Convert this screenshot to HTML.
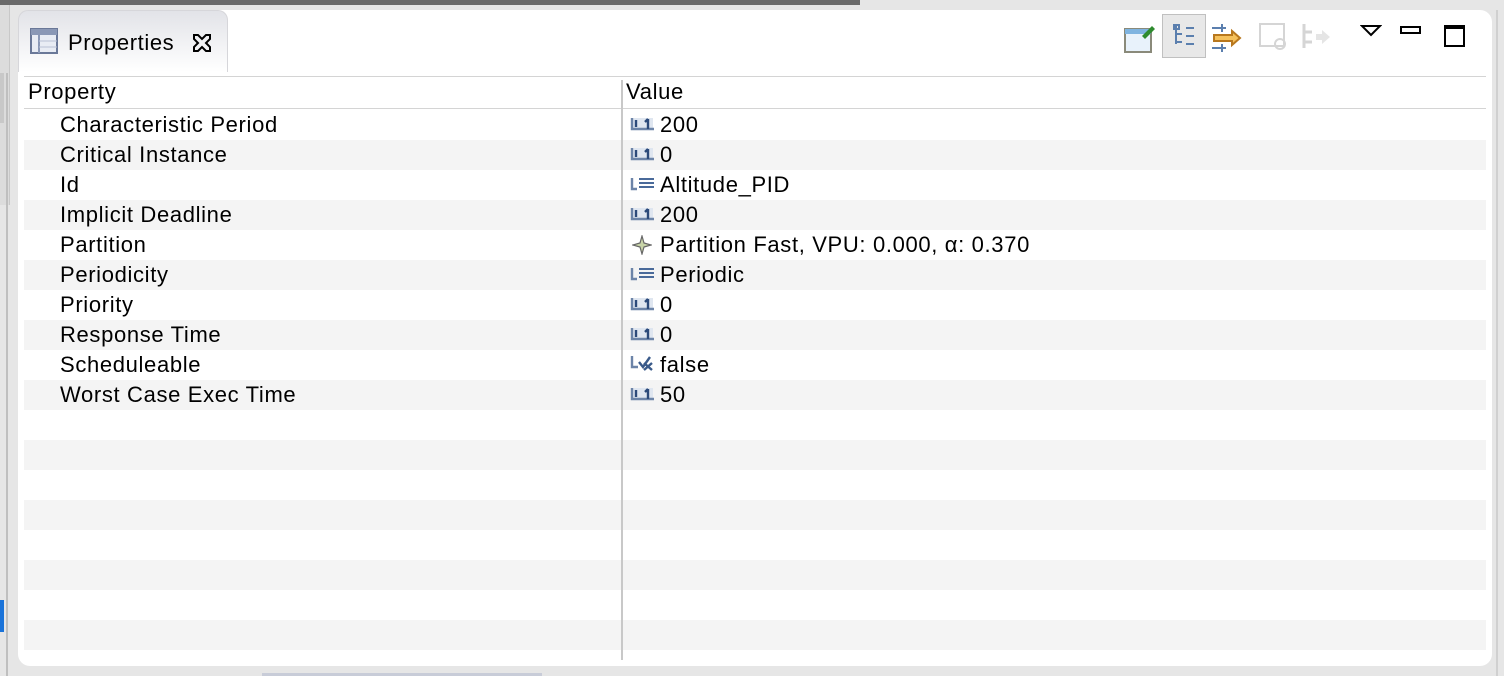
<!DOCTYPE html>
<html><head><meta charset="utf-8"><style>
*{margin:0;padding:0;box-sizing:border-box}
body{width:1504px;height:676px;background:#e6e6e6;position:relative;overflow:hidden;font-family:"Liberation Sans",Arial,sans-serif;color:#000}
.abs{position:absolute}
.row{position:absolute;left:24px;width:1462px;height:30px;font-size:22px;line-height:30px;letter-spacing:0.65px}
.row.g{background:#f4f4f4}
.k{position:absolute;left:36px;top:0}
.v{position:absolute;left:636px;top:0}
</style></head><body>
<div class="abs" style="left:0;top:0;width:860px;height:5px;background:#6a6a6a"></div>
<div class="abs" style="left:0;top:5px;width:10px;height:200px;background:#dcdcdc;border-right:1px solid #c8c8c8"></div>
<div class="abs" style="left:0;top:73px;width:4px;height:50px;background:#c8c8c8"></div>
<div class="abs" style="left:0;top:600px;width:4px;height:32px;background:#1a73d9"></div>
<div class="abs" style="left:6px;top:73px;width:2px;height:603px;background:#bfbfbf"></div>
<div class="abs" style="left:18px;top:10px;width:1474px;height:656px;background:#fff;border-radius:12px"></div>
<div class="abs" style="left:1496px;top:10px;width:2px;height:666px;background:#d0d0d0"></div>
<div class="abs" style="left:18px;top:10px;width:210px;height:62px;background:linear-gradient(#e2e3e8,#fff);border-radius:10px 10px 0 0;border:1px solid #d6d6da;border-bottom:none"></div>
<svg class="abs" style="left:30px;top:28px" width="28" height="26"><rect x="1" y="1" width="26" height="24" fill="#e8ecf4" stroke="#6a7898" stroke-width="2"/><rect x="1" y="1" width="26" height="6" fill="#8a98b6"/><line x1="9" y1="7" x2="9" y2="25" stroke="#8a98b6" stroke-width="2"/><line x1="9" y1="13" x2="27" y2="13" stroke="#b8c0d4"/><line x1="9" y1="19" x2="27" y2="19" stroke="#b8c0d4"/></svg>
<div class="abs" style="left:68px;top:30px;font-size:22px;letter-spacing:0.6px">Properties</div>
<svg class="abs" style="left:192px;top:33px" width="20" height="20"><path d="M2 2 L6 2 L10 6 L14 2 L18 2 L18 6 L14 10 L18 14 L18 18 L14 18 L10 14 L6 18 L2 18 L2 14 L6 10 L2 6 Z" fill="none" stroke="#000" stroke-width="2"/></svg>
<svg class="abs" style="left:1124px;top:22px" width="32" height="32"><rect x="1" y="7" width="26" height="23" fill="#e8f2fb" stroke="#8a8a7a" stroke-width="2"/><rect x="1" y="7" width="26" height="5" fill="#7fb4e0"/><path d="M18 14 L28 4 L31 7 L21 17Z" fill="#2e8b2e"/></svg>
<div class="abs" style="left:1162px;top:14px;width:44px;height:44px;background:#e8e8e8;border:1px solid #c0c0c0"></div>
<svg class="abs" style="left:1172px;top:24px" width="24" height="24" stroke="#5b7fae" stroke-width="2" fill="none"><path d="M4 2V20M4 10H10M4 18H10M14 4H22M14 12H22M14 20H22"/><rect x="2" y="1" width="5" height="4"/></svg>
<svg class="abs" style="left:1210px;top:22px" width="36" height="30"><path d="M2 6H16M2 26H16M12 2V10M12 22V30" stroke="#5b7fae" stroke-width="2"/><path d="M4 13H22V9L30 16L22 23V19H4Z" fill="#f5c15c" stroke="#b8781e" stroke-width="2"/></svg>
<svg class="abs" style="left:1258px;top:22px" width="32" height="30" opacity=".3"><rect x="2" y="2" width="24" height="22" fill="none" stroke="#777" stroke-width="2"/><circle cx="22" cy="22" r="5" fill="none" stroke="#777" stroke-width="2"/></svg>
<svg class="abs" style="left:1300px;top:22px" width="32" height="30" opacity=".3"><path d="M4 2V26M4 10H12M4 20H12" stroke="#777" stroke-width="3"/><path d="M16 12H22V8L30 15L22 22V18H16Z" fill="#aaa"/></svg>
<svg class="abs" style="left:1360px;top:24px" width="22" height="14"><path d="M2 2H20L11 11Z" fill="none" stroke="#000" stroke-width="2"/></svg>
<div class="abs" style="left:1400px;top:26px;width:21px;height:8px;border:2px solid #000"></div>
<div class="abs" style="left:1444px;top:25px;width:21px;height:22px;border:2px solid #000;border-top-width:4px"></div>
<div class="abs" style="left:24px;top:76px;width:1462px;height:1px;background:#d4d4d4"></div>
<div class="row" style="top:78px;line-height:28px"><span class="abs" style="left:4px">Property</span><span class="abs" style="left:602px">Value</span></div>
<div class="abs" style="left:24px;top:108px;width:1462px;height:1px;background:#d4d4d4"></div>
<div class="row" style="top:110px"><span class="k">Characteristic Period</span><span class="v">200</span></div>
<div class="row g" style="top:140px"><span class="k">Critical Instance</span><span class="v">0</span></div>
<div class="row" style="top:170px"><span class="k">Id</span><span class="v">Altitude_PID</span></div>
<div class="row g" style="top:200px"><span class="k">Implicit Deadline</span><span class="v">200</span></div>
<div class="row" style="top:230px"><span class="k">Partition</span><span class="v">Partition Fast, VPU: 0.000, α: 0.370</span></div>
<div class="row g" style="top:260px"><span class="k">Periodicity</span><span class="v">Periodic</span></div>
<div class="row" style="top:290px"><span class="k">Priority</span><span class="v">0</span></div>
<div class="row g" style="top:320px"><span class="k">Response Time</span><span class="v">0</span></div>
<div class="row" style="top:350px"><span class="k">Scheduleable</span><span class="v">false</span></div>
<div class="row g" style="top:380px"><span class="k">Worst Case Exec Time</span><span class="v">50</span></div>
<div class="row g" style="top:440px"></div>
<div class="row g" style="top:500px"></div>
<div class="row g" style="top:560px"></div>
<div class="row g" style="top:620px"></div>
<div class="abs" style="left:621px;top:80px;width:2px;height:580px;background:#c8c8c8"></div>
<svg width="0" height="0" style="position:absolute"><defs>
<g id="num"><rect x="1" y="1" width="22" height="12" fill="#dfe6f0"/><path d="M2 1V12H24" stroke="#6c84a8" stroke-width="2.4" fill="none"/><path d="M6 3V10M18 2V12M15 5L18 2" stroke="#2c4a7a" stroke-width="2.4" fill="none"/></g>
<g id="txt"><path d="M2 1V12H7" stroke="#6c84a8" stroke-width="2.4" fill="none"/><path d="M9 2H24M9 6H24M9 10H24" stroke="#4a6a9a" stroke-width="2"/></g>
</defs></svg>
<svg class="abs" style="left:630px;top:117px" width="26" height="15"><use href="#num"/></svg>
<svg class="abs" style="left:630px;top:147px" width="26" height="15"><use href="#num"/></svg>
<svg class="abs" style="left:630px;top:177px" width="26" height="15"><use href="#txt"/></svg>
<svg class="abs" style="left:630px;top:207px" width="26" height="15"><use href="#num"/></svg>
<svg class="abs" style="left:632px;top:235px" width="20" height="20"><path d="M10 1L12 8L19 10L12 12L10 19L8 12L1 10L8 8Z" fill="#c8d4a8" stroke="#666" stroke-width="1.2"/></svg>
<svg class="abs" style="left:630px;top:267px" width="26" height="15"><use href="#txt"/></svg>
<svg class="abs" style="left:630px;top:297px" width="26" height="15"><use href="#num"/></svg>
<svg class="abs" style="left:630px;top:327px" width="26" height="15"><use href="#num"/></svg>
<svg class="abs" style="left:630px;top:355px" width="26" height="18"><path d="M2 1V12H8" stroke="#6c84a8" stroke-width="2.4" fill="none"/><path d="M9 7L13 12L20 2M14 8L22 15M22 8L14 15" stroke="#3a5a8a" stroke-width="2.4" fill="none"/></svg>
<svg class="abs" style="left:630px;top:387px" width="26" height="15"><use href="#num"/></svg>
<div class="abs" style="left:262px;top:673px;width:280px;height:3px;background:#c8ccd8"></div>
</body></html>
